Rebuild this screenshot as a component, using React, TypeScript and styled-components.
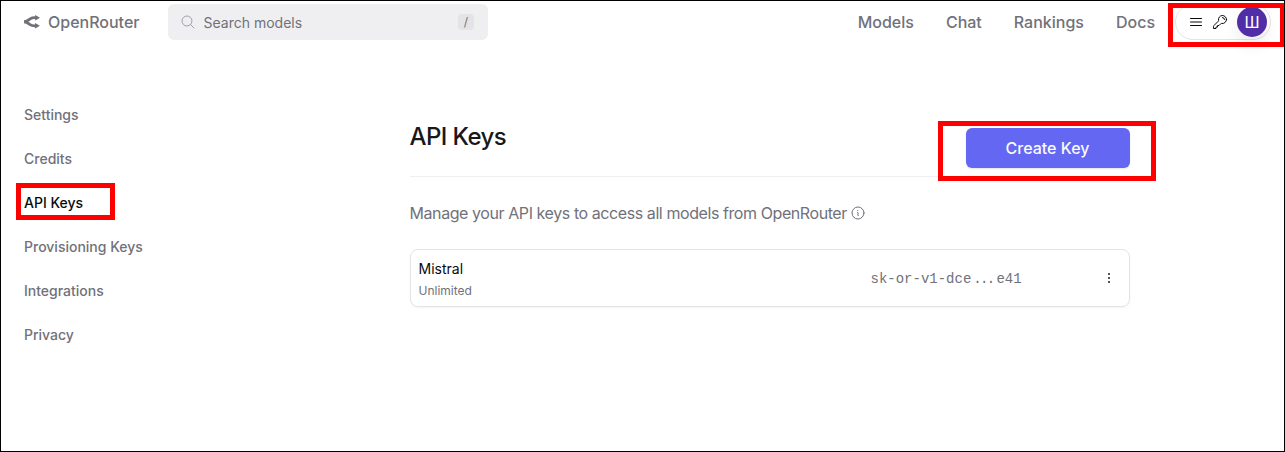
import React from "react";
import styled, { createGlobalStyle } from "styled-components";
import {
  HiBars3,
  HiEllipsisVertical,
  HiOutlineInformationCircle,
  HiOutlineKey,
  HiOutlineMagnifyingGlass,
} from "react-icons/hi2";

const GlobalStyle = createGlobalStyle`
  *, *::before, *::after { box-sizing: border-box; }
  body { margin: 0; background: #fff; font-family: Inter, "Liberation Sans", sans-serif; color: #18181b; }
`;

const Page = styled.div`
  position: relative;
  height: 452px;
  border: 1px solid #000;
  overflow: hidden;
`;

const Header = styled.header`
  display: flex;
  align-items: center;
  height: 42px;
  padding: 0 13px 0 23px;
`;

const Brand = styled.a`
  display: flex;
  align-items: center;
  gap: 8px;
  width: 144px;
  color: #71717a;
  font-size: 16px;
  font-weight: 500;
  line-height: 24px;
`;

const Search = styled.div`
  display: flex;
  align-items: center;
  width: 320px;
  height: 36px;
  padding: 0 14px 0 12px;
  border-radius: 6px;
  background: #efeff1;
  color: #a1a1aa;
`;

const Placeholder = styled.span`
  flex: 1;
  margin-left: 7.5px;
  color: #71717a;
  font-size: 14px;
`;

const Shortcut = styled.kbd`
  width: 16px;
  height: 16px;
  border-radius: 4px;
  background: #e4e4e7;
  color: #71717a;
  font-family: inherit;
  font-size: 12px;
  line-height: 16px;
  text-align: center;
`;

const Nav = styled.nav`
  display: flex;
  gap: 32px;
  margin-left: auto;
  color: #71717a;
  font-size: 16px;
  font-weight: 500;
  line-height: 24px;
`;

const Account = styled.div`
  display: flex;
  align-items: center;
  width: 96px;
  height: 36px;
  margin-left: 20px;
  padding: 0 3px 0 12px;
  border: 1px solid #e4e4e7;
  border-radius: 18px;
  color: #09090b;
`;

const BarsIcon = styled(HiBars3)`
  width: 16px;
  height: 16px;
`;

const KeyIcon = styled(HiOutlineKey)`
  width: 16px;
  height: 16px;
  margin-left: 8px;
`;

const Avatar = styled.div`
  width: 30px;
  height: 30px;
  margin-left: auto;
  border-radius: 50%;
  background: #512da8;
  box-shadow: 0 8px 16px rgba(0, 0, 0, 0.08);
  color: #fff;
  font-family: Roboto, sans-serif;
  font-size: 16px;
  line-height: 32px;
  text-align: center;
`;

const Body = styled.div`
  display: flex;
`;

const Sidebar = styled.aside`
  display: flex;
  flex-direction: column;
  flex: none;
  gap: 24px;
  width: 408.5px;
  padding: 62px 0 0 23px;
`;

const SideLink = styled.a<{ $active?: boolean }>`
  color: ${(p) => (p.$active ? "#09090b" : "#71717a")};
  font-size: 14px;
  font-weight: 500;
  line-height: 20px;
`;

const Main = styled.main`
  width: 720px;
  padding-top: 73px;
`;

const TitleRow = styled.div`
  display: flex;
  justify-content: space-between;
  height: 61px;
  border-bottom: 1px solid #efeff1;
`;

const Title = styled.h1`
  margin: 5px 0 0;
  font-size: 24px;
  font-weight: 500;
  line-height: 32px;
  letter-spacing: -0.6px;
`;

const CreateButton = styled.button`
  width: 164px;
  height: 40px;
  margin-top: 12px;
  padding: 0;
  border: 0;
  border-radius: 6px;
  background: #6467f2;
  box-shadow: 0 1px 2px rgba(0, 0, 0, 0.1);
  color: #fafafa;
  font-family: inherit;
  font-size: 16px;
  font-weight: 500;
  line-height: 24px;
`;

const Intro = styled.p`
  display: flex;
  align-items: center;
  gap: 3px;
  margin: 24px 0;
  color: #71717a;
  font-size: 16px;
  line-height: 24px;
  letter-spacing: -0.42px;
  white-space: nowrap;
`;

const KeyCard = styled.div`
  display: flex;
  align-items: center;
  height: 58px;
  padding: 0 12px 0 8px;
  border: 1px solid #e4e4e7;
  border-radius: 8px;
  box-shadow: 0 1px 2px rgba(0, 0, 0, 0.05);
`;

const KeyInfo = styled.div`
  width: 452px;
  padding-top: 2px;
`;

const KeyName = styled.div`
  color: #09090b;
  font-size: 14px;
  line-height: 20px;
`;

const KeyLimit = styled.div`
  margin-top: 4px;
  color: #71717a;
  font-size: 12px;
  line-height: 16px;
`;

const KeyValue = styled.code`
  padding-top: 2px;
  color: #71717a;
  font-family: "Liberation Mono", monospace;
  font-size: 14px;
  line-height: 20px;
`;

const Dots = styled.span`
  margin: 0 3px 0 2px;
  letter-spacing: -1.7px;
`;

const MenuIcon = styled(HiEllipsisVertical)`
  width: 16px;
  height: 16px;
  margin-left: auto;
`;

const Highlight = styled.div<{ $x: number; $y: number; $w: number; $h: number }>`
  position: absolute;
  left: ${(p) => p.$x}px;
  top: ${(p) => p.$y}px;
  width: ${(p) => p.$w}px;
  height: ${(p) => p.$h}px;
  border: 5px solid #f00;
  pointer-events: none;
`;

const Logo = () => (
  <svg width="16" height="16" viewBox="0 0 512 512" fill="currentColor" stroke="currentColor">
    <path d="M3 248.945C18 248.945 76 236 106 219C136 202 136 202 198 158C276.497 102.293 332 120.945 423 120.945" fill="none" strokeWidth="90" />
    <path d="M511 121.5L357.25 210.268L357.25 32.7324L511 121.5Z" />
    <path d="M0 249C15 249 73 261.945 103 278.945C133 295.945 133 295.945 195 339.945C273.497 395.652 329 377 420 377" fill="none" strokeWidth="90" />
    <path d="M508 376.445L354.25 465.213L354.25 287.678L508 376.445Z" />
  </svg>
);

const sections = ["Settings", "Credits", "API Keys", "Provisioning Keys", "Integrations", "Privacy"];

export default function App() {
  return (
    <>
      <GlobalStyle />
      <Page>
        <Header>
          <Brand>
            <Logo />
            OpenRouter
          </Brand>
          <Search>
            <HiOutlineMagnifyingGlass size={16} />
            <Placeholder>Search models</Placeholder>
            <Shortcut>/</Shortcut>
          </Search>
          <Nav>
            <a>Models</a>
            <a>Chat</a>
            <a>Rankings</a>
            <a>Docs</a>
          </Nav>
          <Account>
            <BarsIcon />
            <KeyIcon />
            <Avatar>Ш</Avatar>
          </Account>
        </Header>
        <Body>
          <Sidebar>
            {sections.map((name) => (
              <SideLink key={name} $active={name === "API Keys"}>
                {name}
              </SideLink>
            ))}
          </Sidebar>
          <Main>
            <TitleRow>
              <Title>API Keys</Title>
              <CreateButton>Create Key</CreateButton>
            </TitleRow>
            <Intro>
              Manage your API keys to access all models from OpenRouter
              <HiOutlineInformationCircle size={16} />
            </Intro>
            <KeyCard>
              <KeyInfo>
                <KeyName>Mistral</KeyName>
                <KeyLimit>Unlimited</KeyLimit>
              </KeyInfo>
              <KeyValue>
                sk-or-v1-dce<Dots>...</Dots>e41
              </KeyValue>
              <MenuIcon />
            </KeyCard>
          </Main>
        </Body>
        <Highlight $x={1167} $y={2} $w={117} $h={44} />
        <Highlight $x={15} $y={182} $w={99} $h={37} />
        <Highlight $x={937} $y={120} $w={218} $h={60} />
      </Page>
    </>
  );
}
